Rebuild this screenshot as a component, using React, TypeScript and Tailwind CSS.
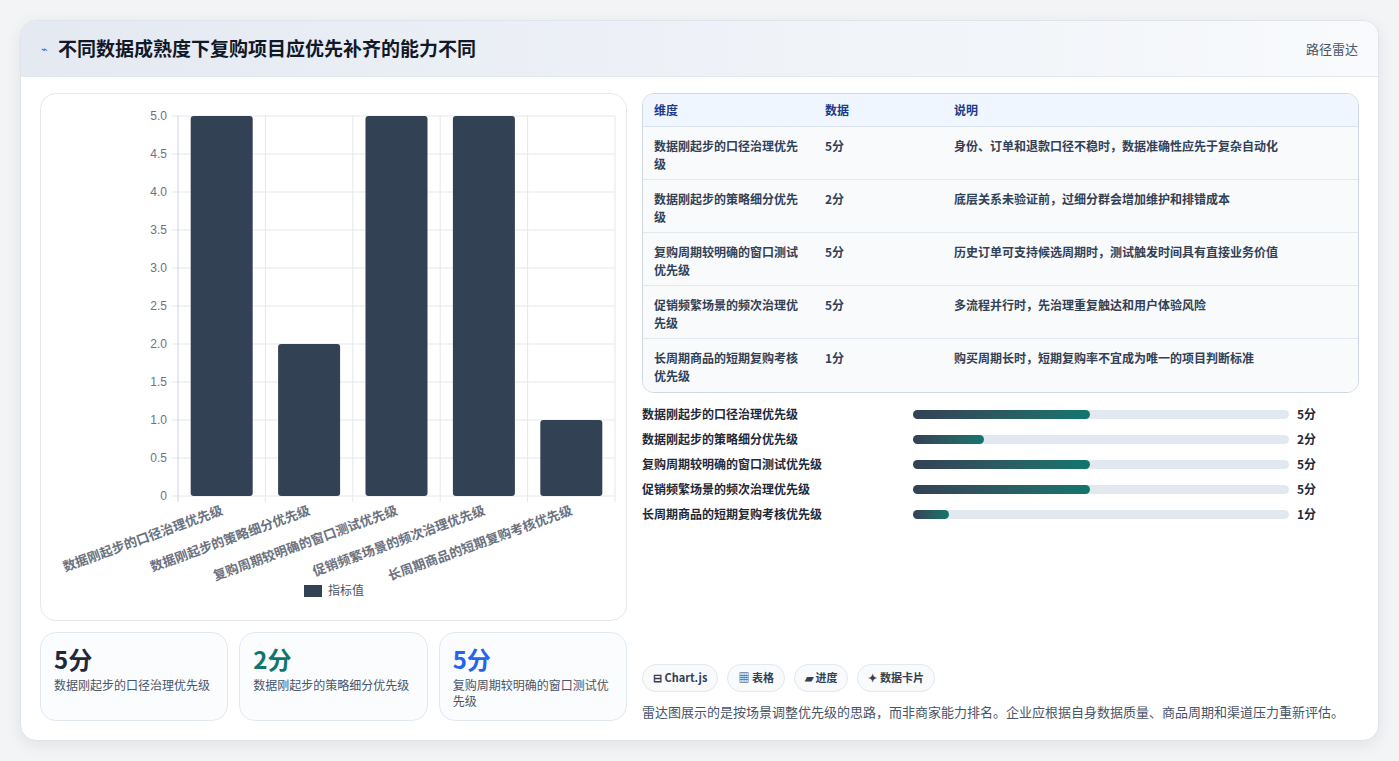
const font = { fontFamily: '"Noto Sans CJK SC", "Noto Sans", sans-serif' };

const items = [
  { name: "数据刚起步的口径治理优先级", score: 5, note: "身份、订单和退款口径不稳时，数据准确性应先于复杂自动化" },
  { name: "数据刚起步的策略细分优先级", score: 2, note: "底层关系未验证前，过细分群会增加维护和排错成本" },
  { name: "复购周期较明确的窗口测试优先级", score: 5, note: "历史订单可支持候选周期时，测试触发时间具有直接业务价值" },
  { name: "促销频繁场景的频次治理优先级", score: 5, note: "多流程并行时，先治理重复触达和用户体验风险" },
  { name: "长周期商品的短期复购考核优先级", score: 1, note: "购买周期长时，短期复购率不宜成为唯一的项目判断标准" },
];

function Chart() {
  const left = 137, right = 574, top = 22, bottom = 402;
  const cw = (right - left) / 5;
  const y = (v: number) => bottom - (v / 5) * (bottom - top);
  const ticks = [0, 0.5, 1, 1.5, 2, 2.5, 3, 3.5, 4, 4.5, 5];
  return (
    <svg width="586" height="527" className="block">
      {ticks.map((t) => (
        <g key={t}>
          <line x1={left - 6} x2={right} y1={y(t)} y2={y(t)} stroke="#e5e7eb" />
          <text x={left - 11} y={y(t) + 4} textAnchor="end" fontSize="12" fill="#6b7280" fontFamily="Liberation Sans, sans-serif">
            {t === 0 ? "0" : t.toFixed(1)}
          </text>
        </g>
      ))}
      {[0, 1, 2, 3, 4, 5].map((i) => (
        <line key={i} x1={left + i * cw} x2={left + i * cw} y1={top} y2={bottom + 6} stroke={i === 0 ? "#d1d5db" : "#e5e7eb"} />
      ))}
      {items.map((it, i) => {
        const cx = left + cw * i + cw / 2;
        return (
          <g key={it.name}>
            <rect x={cx - 31} y={y(it.score)} width="62" height={bottom - y(it.score)} rx="3" fill="#334155" />
            <text transform={`translate(${cx + 2},${bottom + 18}) rotate(-20)`} textAnchor="end" fontSize="13" fontWeight="600" fill="#6b7280" style={font}>
              {it.name}
            </text>
          </g>
        );
      })}
      <rect x="263" y="491" width="18" height="12" fill="#334155" />
      <text x="287" y="501" fontSize="12" fill="#4b5563" style={font}>指标值</text>
    </svg>
  );
}

export default function App() {
  const fills = [47, 19, 47, 47, 9.5];
  return (
    <div className="min-h-[761px] w-[1399px] bg-[#f3f4f6] pt-5 pb-5" style={font}>
      <div className="mx-5 overflow-hidden rounded-2xl border border-[#dfe3ea] bg-white shadow-[0_4px_16px_rgba(15,23,42,0.08)]">
        <div className="flex h-14 items-center justify-between border-b border-[#e2e8f0] bg-gradient-to-r from-[#e4e9f2] to-[#f8fafc] pl-5 pr-5">
          <div className="flex items-center gap-2.5">
            <span className="text-[11px] text-[#2563eb]">⌁</span>
            <span className="text-[19px] font-bold text-[#111827]">不同数据成熟度下复购项目应优先补齐的能力不同</span>
          </div>
          <span className="text-[13px] text-[#4b5563]">路径雷达</span>
        </div>
        <div className="flex gap-[15px] px-[19px] pt-4 pb-[19px]">
          <div className="flex w-[587px] flex-col gap-[11px]">
            <div className="h-[528px] rounded-2xl border border-[#e5e7eb] bg-white">
              <Chart />
            </div>
            <div className="flex gap-[11px]">
              {[
                { v: "5分", c: "text-[#1e293b]", l: "数据刚起步的口径治理优先级" },
                { v: "2分", c: "text-[#0f766e]", l: "数据刚起步的策略细分优先级" },
                { v: "5分", c: "text-[#2563eb]", l: "复购周期较明确的窗口测试优先级" },
              ].map((s, i) => (
                <div key={i} className="h-[89px] flex-1 rounded-2xl border border-[#e2e8f0] bg-[#fbfcfe] px-[13px] pt-2">
                  <div className={`text-[24px] font-bold leading-[36px] ${s.c}`}>{s.v}</div>
                  <div className="text-[12px] leading-[16px] text-[#475569]">{s.l}</div>
                </div>
              ))}
            </div>
          </div>
          <div className="flex flex-1 flex-col">
            <div className="overflow-hidden rounded-xl border border-[#cfd8e3]">
              <div className="flex h-[33px] items-center border-b border-[#dbe3ee] bg-[#eff6ff] text-[12px] font-semibold text-[#1e3a8a]">
                <div className="w-[171px] pl-[11px]">维度</div>
                <div className="w-[129px] pl-[11px]">数据</div>
                <div className="flex-1 pl-[11px]">说明</div>
              </div>
              {items.map((it, i) => (
                <div key={i} className={`flex h-[53px] pt-[10px] text-[12px] font-semibold leading-[18px] text-[#334155] bg-[#f8fafc] ${i < 4 ? "border-b border-[#e2e8f0]" : ""}`}>
                  <div className="w-[171px] pl-[11px] pr-3">{it.name}</div>
                  <div className="w-[129px] pl-[11px]">{it.score}分</div>
                  <div className="flex-1 pl-[11px]">{it.note}</div>
                </div>
              ))}
            </div>
            <div className="mt-[13px] flex flex-col gap-[9px]">
              {items.map((it, i) => (
                <div key={i} className="flex h-4 items-center text-[12px] font-semibold text-[#1f2937]">
                  <div className="w-[271px]">{it.name}</div>
                  <div className="h-[9px] w-[376px] rounded-full bg-[#e2e8f0]">
                    <div className="h-full rounded-full bg-gradient-to-r from-[#334155] to-[#0f766e]" style={{ width: `${fills[i]}%` }} />
                  </div>
                  <div className="ml-2">{it.score}分</div>
                </div>
              ))}
            </div>
            <div className="mt-auto flex gap-[9px]">
              {["⊟ Chart.js", "▦ 表格", "▰ 进度", "✦ 数据卡片"].map((c) => (
                <span key={c} className="flex h-7 items-center rounded-full border border-[#e2e8f0] bg-[#f8fafc] px-[10px] text-[11px] font-semibold text-[#334155]">{c}</span>
              ))}
            </div>
            <div className="mt-[10px] text-[13px] text-[#475569]">雷达图展示的是按场景调整优先级的思路，而非商家能力排名。企业应根据自身数据质量、商品周期和渠道压力重新评估。</div>
          </div>
        </div>
      </div>
    </div>
  );
}
